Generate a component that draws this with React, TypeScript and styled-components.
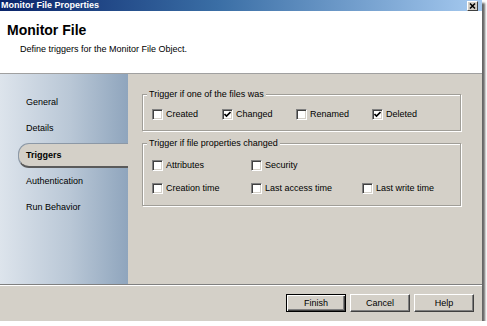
import * as React from "react";
import styled, { createGlobalStyle } from "styled-components";

const GlobalStyle = createGlobalStyle`
  html, body {
    margin: 0;
    padding: 0;
    background: #ffffff;
  }
  body {
    font-family: "Liberation Sans", Arial, sans-serif;
    font-size: 9px;
    color: #000000;
  }
`;

const SWindow = styled.div`
  width: 482px;
  height: 321px;
  display: flex;
  flex-direction: column;
  background: #d4d0c8;
  box-shadow: 3px 3px 2px rgba(0, 0, 0, 0.6);
  overflow: hidden;
`;

const STitleBar = styled.div`
  height: 11px;
  flex-shrink: 0;
  display: flex;
  align-items: center;
  justify-content: space-between;
  padding: 0 4px 0 1px;
  background: linear-gradient(to right, #0a246a 0%, #3a6ea5 45%, #a6caf0 100%);
`;

const STitleText = styled.span`
  color: #ffffff;
  font-weight: bold;
  font-size: 9px;
  line-height: 11px;
`;

const SCloseButton = styled.div`
  width: 11px;
  height: 10px;
  box-sizing: border-box;
  margin-top: 1px;
  display: grid;
  place-items: center;
  background: #d4d0c8;
  border-top: 1px solid #ffffff;
  border-left: 1px solid #ffffff;
  border-right: 1px solid #404040;
  border-bottom: 1px solid #404040;
`;

const SHeader = styled.div`
  height: 63px;
  flex-shrink: 0;
  box-sizing: border-box;
  background: #ffffff;
  border-bottom: 1px solid #a0a0a0;
  padding: 11px 0 0 7px;
`;

const SHeading = styled.h1`
  margin: 0;
  font-size: 14px;
  line-height: 16px;
  font-weight: bold;
`;

const SSubtitle = styled.p`
  margin: 6px 0 0 13px;
  font-size: 9px;
  line-height: 11px;
`;

const SBody = styled.div`
  height: 210px;
  flex-shrink: 0;
  display: flex;
`;

const SSidebar = styled.nav`
  width: 128px;
  padding-top: 15px;
  box-sizing: border-box;
  background: linear-gradient(to right, #dde4ec 0%, #b9c7d6 55%, #8fa5bd 100%);
`;

const SNavItem = styled.div<{ $active?: boolean }>`
  height: ${({ $active }) => ($active ? "22px" : "26px")};
  line-height: ${({ $active }) => ($active ? "22px" : "26px")};
  padding-left: ${({ $active }) => ($active ? "7px" : "26px")};
  margin: ${({ $active }) => ($active ? "2px 0 0 18px" : "0")};
  font-weight: ${({ $active }) => ($active ? "bold" : "normal")};
  background: ${({ $active }) => ($active ? "#d4d0c8" : "transparent")};
  border-radius: ${({ $active }) => ($active ? "11px 0 0 11px" : "0")};
  border: ${({ $active }) => ($active ? "1px solid #8c98a6" : "none")};
  border-right: none;
  border-bottom: ${({ $active }) => ($active ? "2px solid #5a5a5a" : "none")};
  box-sizing: content-box;
`;

const SContent = styled.div`
  flex: 1;
  padding: 15px 21px 0 14px;
  display: flex;
  flex-direction: column;
  gap: 7px;
`;

const SGroup = styled.fieldset<{ $pad: string }>`
  margin: 0;
  padding: ${({ $pad }) => $pad};
  border: 1px solid #a09e98;
  box-shadow: 1px 1px 0 #ffffff, inset 1px 1px 0 #ffffff;
  display: flex;
  flex-direction: column;
  gap: 9px;
`;

const SLegend = styled.legend`
  margin-left: -5px;
  padding: 0 2px;
  font-size: 9px;
  line-height: 11px;
  background: #d4d0c8;
`;

const SRow = styled.div<{ $cols: string }>`
  display: grid;
  grid-template-columns: ${({ $cols }) => $cols};
  height: 14px;
  align-items: center;
`;

const SOption = styled.label`
  display: flex;
  align-items: center;
  gap: 3px;
  white-space: nowrap;
  line-height: 14px;
`;

const SBox = styled.span`
  width: 11px;
  height: 11px;
  box-sizing: border-box;
  display: grid;
  place-items: center;
  background: #ffffff;
  border-top: 1px solid #808080;
  border-left: 1px solid #808080;
  border-right: 1px solid #ffffff;
  border-bottom: 1px solid #ffffff;
  box-shadow: inset 1px 1px 0 #404040, inset -1px -1px 0 #d4d0c8;
`;

const SFooter = styled.div`
  height: 37px;
  flex-shrink: 0;
  box-sizing: border-box;
  border-top: 1px solid #808080;
  box-shadow: inset 0 1px 0 #ffffff;
  display: flex;
  justify-content: flex-end;
  align-items: flex-start;
  gap: 4px;
  padding: 9px 8px 0 0;
`;

const SButton = styled.button<{ $default?: boolean }>`
  width: 60px;
  height: 18px;
  box-sizing: border-box;
  padding: 0;
  font-family: "Liberation Sans", Arial, sans-serif;
  font-size: 9px;
  color: #000000;
  background: #d4d0c8;
  border: 1px solid;
  border-color: ${({ $default }) =>
    $default ? "#000000" : "#ffffff #404040 #404040 #ffffff"};
  box-shadow: ${({ $default }) =>
    $default
      ? "inset 1px 1px 0 #ffffff, inset -1px -1px 0 #404040, inset -2px -2px 0 #808080"
      : "inset -1px -1px 0 #808080"};
`;

const Check = () => (
  <svg width="7" height="7" viewBox="0 0 7 7">
    <path d="M0.5 3 L2.5 5 L6.5 1" fill="none" stroke="#000" strokeWidth="1.6" />
  </svg>
);

const Option = ({ label, checked }: { label: string; checked?: boolean }) => (
  <SOption>
    <SBox>{checked && <Check />}</SBox>
    {label}
  </SOption>
);

const navItems = ["General", "Details", "Triggers", "Authentication", "Run Behavior"];

const App = () => (
  <>
    <GlobalStyle />
    <SWindow>
      <STitleBar>
        <STitleText>Monitor File Properties</STitleText>
        <SCloseButton>
          <svg width="7" height="6" viewBox="0 0 7 6">
            <path d="M1 0.5 L6 5.5 M6 0.5 L1 5.5" stroke="#000" strokeWidth="1.5" />
          </svg>
        </SCloseButton>
      </STitleBar>
      <SHeader>
        <SHeading>Monitor File</SHeading>
        <SSubtitle>Define triggers for the Monitor File Object.</SSubtitle>
      </SHeader>
      <SBody>
        <SSidebar>
          {navItems.map((item) => (
            <SNavItem key={item} $active={item === "Triggers"}>
              {item}
            </SNavItem>
          ))}
        </SSidebar>
        <SContent>
          <SGroup $pad="7px 0 9px 9px">
            <SLegend>Trigger if one of the files was</SLegend>
            <SRow $cols="70px 74px 76px auto">
              <Option label="Created" />
              <Option label="Changed" checked />
              <Option label="Renamed" />
              <Option label="Deleted" checked />
            </SRow>
          </SGroup>
          <SGroup $pad="9px 0 10px 9px">
            <SLegend>Trigger if file properties changed</SLegend>
            <SRow $cols="99px 111px auto">
              <Option label="Attributes" />
              <Option label="Security" />
            </SRow>
            <SRow $cols="99px 111px auto">
              <Option label="Creation time" />
              <Option label="Last access time" />
              <Option label="Last write time" />
            </SRow>
          </SGroup>
        </SContent>
      </SBody>
      <SFooter>
        <SButton $default>Finish</SButton>
        <SButton>Cancel</SButton>
        <SButton>Help</SButton>
      </SFooter>
    </SWindow>
  </>
);

export default App;
